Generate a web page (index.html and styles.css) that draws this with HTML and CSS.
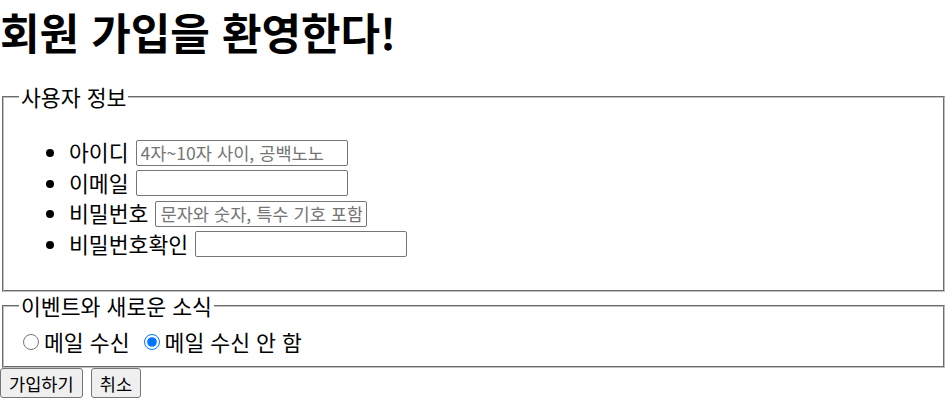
FILE: index.html
```html
<!DOCTYPE html>
<html lang="ko">
<head>
  <meta charset="UTF-8" />
  <meta name="viewport" content="width=device-width, initial-scale=1.0"/>
  <title>회원 가입</title>
  <link rel="stylesheet" href="styles.css">
</head>
<body>
  <h1 class="title">회원 가입을 환영한다!</h1>

  <form class="join">
    <fieldset class="group">
      <legend>사용자 정보</legend>
      <ul class="fields">
        <li><label>아이디</label><input class="field" type="text" placeholder="4자~10자 사이, 공백노노"></li>
        <li><label>이메일</label><input class="field" type="email"></li>
        <li><label>비밀번호</label><input class="field" type="password" placeholder="문자와 숫자, 특수 기호 포함"></li>
        <li><label>비밀번호확인</label><input class="field" type="password"></li>
      </ul>
    </fieldset>

    <fieldset class="group group-news">
      <legend>이벤트와 새로운 소식</legend>
      <div class="radios">
        <input class="radio" type="radio" name="mail" id="mail-yes"><label for="mail-yes">메일 수신</label>
        <input class="radio" type="radio" name="mail" id="mail-no" checked><label for="mail-no">메일 수신 안 함</label>
      </div>
    </fieldset>

    <div class="actions">
      <button type="submit" class="btn">가입하기</button>
      <button type="reset" class="btn">취소</button>
    </div>
  </form>
</body>
</html>
```

FILE: styles.css
```css
body {
  margin: 0;
  font-family: "Noto Sans CJK KR", "Noto Sans", sans-serif;
  font-size: 21.6px;
  color: #000;
  background: #fff;
}
.title {
  margin: 0 0 21px;
  font-size: 43px;
  line-height: 62px;
  font-weight: bold;
}
.join { margin: 0 7px 0 0; }
.group {
  margin: 0 0 0 2px;
  padding: 7px 15px 12px;
  border: 2px groove #c0c0c0;
}
.group-news { padding-bottom: 10px; }
.group legend {
  padding: 0 2px;
  line-height: 28px;
}
.fields {
  margin: 19px 0;
  padding-left: 50px;
}
.fields li {
  height: 30.5px;
  line-height: 30px;
}
.field {
  box-sizing: border-box;
  width: 212px;
  height: 26px;
  margin-left: 7px;
  padding: 0 4px;
  vertical-align: 1px;
  border: 1px solid #767676;
  border-radius: 2px;
  font-family: inherit;
  font-size: 17.6px;
}
.field::placeholder { color: #757575; }
.radios {
  display: flex;
  align-items: center;
  height: 29px;
}
.radio {
  width: 16px;
  height: 16px;
  margin: 0 5px 0 4px;
}
.radio + label + .radio { margin-left: 14px; }
.actions {
  display: flex;
  gap: 8px;
}
.btn {
  height: 30px;
  padding: 0 8px;
  border: 1px solid #767676;
  border-radius: 3px;
  background-color: #efefef;
  font-family: inherit;
  font-size: 17.6px;
  color: #000;
}
```
